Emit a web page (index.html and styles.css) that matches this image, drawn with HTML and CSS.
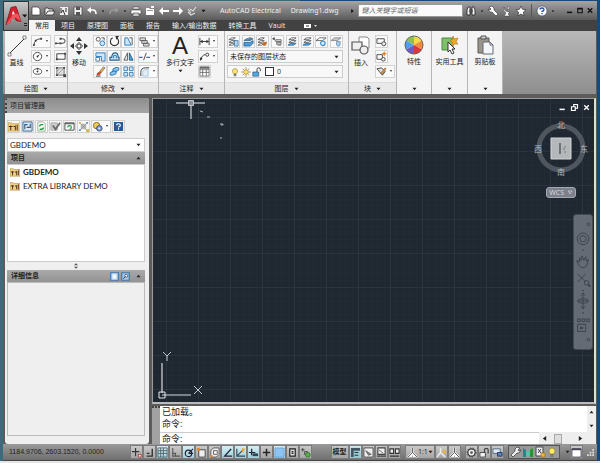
FILE: index.html
```html
<!DOCTYPE html>
<html lang="zh-CN">
<head>
  <meta charset="UTF-8" />
  <title>AutoCAD Electrical - Drawing1.dwg</title>
  <link rel="stylesheet" href="styles.css">
</head>
<body>
  <!-- icon sprite -->
  <svg class="sprite" aria-hidden="true">
    <symbol id="new" viewBox="0 0 12 12"><path d="M2 2h6l2 2v6H2z" fill="#fff" stroke="#333" stroke-width=".7"/></symbol>
    <symbol id="open" viewBox="0 0 12 12"><path d="M1 10V3h3l1 1h4v2h2l-2 4z" fill="#eee" stroke="#333" stroke-width=".8"/><path d="M2 9l2-3h6" stroke="#444" fill="none"/></symbol>
    <symbol id="saveas" viewBox="0 0 12 12"><path d="M2 2h8v8H2z" fill="#eee"/><path d="M3 3v5l2-3 2 5M8 3v4" stroke="#333" fill="none"/></symbol>
    <symbol id="save" viewBox="0 0 12 12"><path d="M2 2h8v8H2z" fill="#eee" stroke="#333" stroke-width=".6"/><path d="M4 2h4v3H4zM4 7h4v3H4z" fill="#555"/></symbol>
    <symbol id="undo" viewBox="0 0 12 12"><path d="M2 5h5q3 0 3 4" fill="none" stroke="#fff" stroke-width="1.6"/><path d="M1 5l4-3v6z" fill="#fff"/></symbol>
    <symbol id="redo" viewBox="0 0 12 12"><path d="M10 5H5Q2 5 2 9" fill="none" stroke="#999" stroke-width="1.6"/><path d="M11 5L7 2v6z" fill="#999"/></symbol>
    <symbol id="print" viewBox="0 0 12 12"><path d="M1 5h10v4H1zM3 2h6v2H3zM3 8h6v3H3z" fill="#fff" stroke="#444" stroke-width=".6"/></symbol>
    <symbol id="folder" viewBox="0 0 12 12"><path d="M2 3h3l1 1h4v6H2zM7 1h3v2H7z" fill="#fff"/><path d="M3 5.500h6" stroke="#999"/></symbol>
    <symbol id="left" viewBox="0 0 12 12"><path d="M1 6l4-4v3h6v2H5v3z" fill="#fff"/></symbol>
    <symbol id="right" viewBox="0 0 12 12"><path d="M11 6L7 2v3H1v2h6v3z" fill="#fff"/></symbol>
    <symbol id="globe" viewBox="0 0 12 12"><path d="M2 7l3 3 4-2M4 4l3 2 3-4M2 4l3 4" fill="none" stroke="#ddd" stroke-width="1.200"/></symbol>
    <symbol id="binoc" viewBox="0 0 12 12"><path d="M2 10V5l1-3h2v8zM7 10V2h2l1 3v5zM5 5h2v2H5z" fill="#eee" stroke="#222" stroke-width=".8"/></symbol>
    <symbol id="wrench" viewBox="0 0 12 12"><path d="M2 2l3-1 2 2v2l4 4-2 2-4-4H3L1 4l2 1 1-1z" fill="#fff" stroke="#333" stroke-width=".6"/></symbol>
    <symbol id="tool" viewBox="0 0 12 12"><path d="M10 2L7 1 5 3v2L1 9l2 2 4-4h2l2-3-2 1-1-1z" fill="#eee" stroke="#333" stroke-width=".7"/></symbol>
    <symbol id="dish" viewBox="0 0 12 12"><path d="M3 2q0 5 6 5L7 9l2 2H3l2-3Q1 5 3 2zM8 1l1 1-2 3-1-1z" fill="#fff" stroke="#333" stroke-width=".5"/></symbol>
    <symbol id="star" viewBox="0 0 12 12"><path d="M6 1l1.500 3.300 3.500.4-2.600 2.400.7 3.700L6 9l-3.100 1.800.7-3.700L1 4.700l3.500-.4z" fill="#fff" stroke="#333" stroke-width=".7"/></symbol>
    <symbol id="help" viewBox="0 0 12 12"><circle cx="6" cy="6" r="5" fill="#fff" stroke="#456" stroke-width=".7"/><path d="M4 4.500Q4 3 6 3t2 1.500Q8 6 6 6.500V7M6 8v1.300" fill="none" stroke="#1d4fae" stroke-width="1.300"/></symbol>
    <symbol id="min" viewBox="0 0 12 12"><path d="M2 8.500h7" stroke="currentColor" stroke-width="2"/></symbol>
    <symbol id="max" viewBox="0 0 12 12"><path d="M3 3h6v6H3zM3 4h6" fill="none" stroke="currentColor" stroke-width="1.500"/></symbol>
    <symbol id="restore" viewBox="0 0 12 12"><path d="M2 5h5v5H2zM5 5V2h5v5H7" fill="none" stroke="currentColor" stroke-width="1.600"/></symbol>
    <symbol id="close" viewBox="0 0 12 12"><path d="M3 3l6 6M9 3l-6 6" stroke="currentColor" stroke-width="1.800"/></symbol>
    <symbol id="line" viewBox="0 0 20 20"><path d="M2 18L18 2" stroke="#333"/><path d="M1 17h3v3H1zM16 0h3v3h-3z" fill="#fff" stroke="#555" stroke-width=".7"/></symbol>
    <symbol id="arc" viewBox="0 0 12 12"><path d="M2 10Q3 3 10 3" fill="none" stroke="#333"/><path d="M1 9h2v2H1zM3 4h2v2H3zM9 2h2v2H9z" fill="#444"/></symbol>
    <symbol id="circle" viewBox="0 0 12 12"><circle cx="6" cy="6" r="4.500" fill="#fff" stroke="#333" stroke-width=".9"/><path d="M6 6l2-2" stroke="#333"/><circle cx="6" cy="6" r="1" fill="#333"/></symbol>
    <symbol id="ellipse" viewBox="0 0 12 12"><ellipse cx="6" cy="6" rx="4.500" ry="3" fill="#fff" stroke="#333" stroke-width=".9"/><circle cx="6" cy="6" r="1" fill="#333"/><path d="M6 2v2" stroke="#333"/></symbol>
    <symbol id="pline" viewBox="0 0 12 12"><path d="M1 8h4M6 3h2q3 0 3 2.500T8 8H5" fill="none" stroke="#333"/><path d="M0 7h2v2H0zM5 2h2v2H5zM5 7h2v2H5z" fill="#444"/></symbol>
    <symbol id="rect" viewBox="0 0 12 12"><path d="M2 3h9v6H2z" fill="none" stroke="#333"/><path d="M1 8h2v2H1zM10 2h2v2h-2z" fill="#444"/></symbol>
    <symbol id="hatch" viewBox="0 0 12 12"><path d="M2 2h8v8H2z" fill="#ddd" stroke="#555" stroke-width=".8"/><path d="M2 6l4-4M2 10l8-8" fill="none" stroke="#888" stroke-width=".7"/><path d="M1 1h2v2H1zM9 1h2v2H9zM1 9h2v2H1zM9 9h3v3H9z" fill="#444"/></symbol>
    <symbol id="move" viewBox="0 0 20 20"><path d="M8 8h4v4H8z" fill="#fff" stroke="#222"/><path d="M10 1l3 4H7zM10 19l3-4H7zM1 10l4-3v6zM19 10l-4-3v6z" fill="#333"/><path d="M10 4v3M10 13v3M4 10h3M13 10h3" stroke="#333" stroke-dasharray="1"/></symbol>
    <symbol id="copy" viewBox="0 0 12 12"><circle cx="3.500" cy="3.500" r="2.200" fill="#fff" stroke="#555"/><circle cx="8" cy="8" r="2.600" fill="#cfe5f8" stroke="#2a7ab8"/><path d="M7 2h3v3" fill="none" stroke="#555"/></symbol>
    <symbol id="rotate" viewBox="0 0 12 12"><path d="M4 2a4.500 4.500 0 1 0 4 0" fill="none" stroke="#333" stroke-width="1.200"/><path d="M7 0h4L8 4z" fill="#333"/></symbol>
    <symbol id="trim" viewBox="0 0 12 12"><path d="M2 10V2h3l4 8z" fill="#cfe5f8" stroke="#2a7ab8"/><path d="M7 2h3v8" fill="none" stroke="#555"/></symbol>
    <symbol id="scale" viewBox="0 0 12 12"><path d="M1 2h10v9H7V6H1z" fill="#cfe5f8" stroke="#2a7ab8"/><path d="M1 7h4v4H1z" fill="#fff" stroke="#2a7ab8"/></symbol>
    <symbol id="stretch" viewBox="0 0 12 12"><path d="M1 10V7h2q0-5 4-5 3 0 3 5h1v3z" fill="#cfe5f8" stroke="#2a5f88" stroke-width="1.200"/><path d="M5 8V5h3v3" fill="none" stroke="#2a7ab8"/></symbol>
    <symbol id="mirror" viewBox="0 0 12 12"><path d="M5 2v8H1z" fill="#eee" stroke="#555"/><path d="M7 2v8h4z" fill="#4ba0dd" stroke="#2a5f88"/></symbol>
    <symbol id="erase" viewBox="0 0 12 12"><path d="M5 6l4-5 2 1-4 5z" fill="#e9b14d" stroke="#553" stroke-width=".6"/><path d="M2 8l3-2 2 1-2 3H2z" fill="#c34b2d"/><path d="M1 11h5" stroke="#333"/></symbol>
    <symbol id="join" viewBox="0 0 12 12"><ellipse cx="7.500" cy="4" rx="3.500" ry="2" fill="#8cc4ee" stroke="#2a7ab8" transform="rotate(-20 7 4)"/><ellipse cx="4.500" cy="8" rx="3.500" ry="2" fill="#8cc4ee" stroke="#2a7ab8" transform="rotate(-20 4 8)"/></symbol>
    <symbol id="array" viewBox="0 0 12 12"><path d="M1 1h4v4H1zM7 1h4v4H7zM1 7h4v4H1zM7 7h4v4H7z" fill="#cfe5f8" stroke="#3a80b5"/></symbol>
    <symbol id="offset" viewBox="0 0 12 12"><path d="M1 2h6v3H1zM3 5h6v3H3zM5 8h6v3H5z" fill="#ddd" stroke="#555" stroke-width=".9"/></symbol>
    <symbol id="break" viewBox="0 0 12 12"><path d="M0 7h4M8 7h4" stroke="#2a7ab8" stroke-width="1.200"/><path d="M5 10l3-8" stroke="#444"/></symbol>
    <symbol id="fillet" viewBox="0 0 12 12"><path d="M2 11V7q0-5 5-5h4" fill="none" stroke="#333"/><path d="M4 11V7q0-3 3-3h3v7z" fill="#e1effa" stroke="#8bb5d5" stroke-width=".7"/></symbol>
    <symbol id="dim" viewBox="0 0 12 12"><path d="M1 2v8M11 2v8M2 6h8" stroke="#333"/><path d="M1 6l3-2v4zM11 6L8 4v4z" fill="#333"/></symbol>
    <symbol id="leader" viewBox="0 0 12 12"><path d="M2 10q1-6 5-6" fill="none" stroke="#333"/><circle cx="9" cy="4" r="1.700" fill="#fff" stroke="#333"/><path d="M1 11V7l3 1z" fill="#333"/></symbol>
    <symbol id="table" viewBox="0 0 12 12"><path d="M1 1h10v10H1zM1 4h10M1 7h10M4 4v7M8 4v7" fill="#fff" stroke="#555" stroke-width=".8"/><path d="M1 1h10v2H1z" fill="#666"/></symbol>
    <symbol id="layers" viewBox="0 0 12 12"><path d="M1 4l3-2h4L5 4zM1 7l3-2h4L5 7zM1 10l3-2h4l-3 2z" fill="#fff" stroke="#444" stroke-width=".8"/><path d="M7 5h4v6H7z" fill="#b8d6ef" stroke="#2a6fa5" stroke-width=".8"/></symbol>
    <symbol id="layerset" viewBox="0 0 12 12"><path d="M1 5l3-2h7L8 5zM1 7l7 0 3-2v3l-3 3H1z" fill="#4a9cdc" stroke="#235b88" stroke-width=".8"/><path d="M6 1l4 1-2 2" fill="#777"/></symbol>
    <symbol id="layerfix" viewBox="0 0 12 12"><path d="M1 4l3-2h4L5 4zM1 7l3-2h4L5 7zM1 10l3-2h4l-3 2z" fill="#fff" stroke="#444" stroke-width=".8"/><path d="M6 7l5-1-1 4-3 1z" fill="#c56a2c"/></symbol>
    <symbol id="layerprev" viewBox="0 0 12 12"><path d="M4 4h6v2H4zM5 7h5v2H5zM6 10h4" fill="#ddd" stroke="#555" stroke-width=".8"/><path d="M0 3l3-2v4z" fill="#444"/></symbol>
    <symbol id="layeriso" viewBox="0 0 12 12"><path d="M2 4l3-2h5L7 4zM2 7l3-2h5L7 7z" fill="#fff" stroke="#444" stroke-width=".8"/><path d="M1 10l3-2h6l-3 2z" fill="#5aa8e2" stroke="#235b88" stroke-width=".8"/></symbol>
    <symbol id="layerfrz" viewBox="0 0 12 12"><path d="M0 5l4-3h7L7 5z" fill="#fff" stroke="#444" stroke-width=".8"/><circle cx="7.500" cy="8" r="2.500" fill="#cfe9fb" stroke="#3b8cc6" stroke-width="1.200"/></symbol>
    <symbol id="layeroff" viewBox="0 0 12 12"><path d="M0 5l4-3h7L7 5z" fill="#ccc" stroke="#777" stroke-width=".8"/><path d="M6 6h4v3l-1 2H7L6 9z" fill="#a9cdea" stroke="#4a7ba0" stroke-width=".7"/></symbol>
    <symbol id="bulb" viewBox="0 0 12 12"><path d="M3 5a3 3 0 1 1 6 0q0 2-1.500 3h-3Q3 7 3 5z" fill="#ffe96b" stroke="#97803a" stroke-width=".8"/><path d="M4.500 8h3v3h-3z" fill="#777"/></symbol>
    <symbol id="sun" viewBox="0 0 12 12"><path d="M6 0v12M0 6h12M2 2l8 8M10 2l-8 8" stroke="#9b7a30" stroke-width=".8"/><circle cx="6" cy="6" r="2.800" fill="#ffe36a" stroke="#9b7a30" stroke-width=".7"/></symbol>
    <symbol id="unlock" viewBox="0 0 12 12"><path d="M1 6h7v5H1z" fill="#5ba6dd" stroke="#235b88" stroke-width=".8"/><path d="M6 6V3q0-2 2-2t2 2v2" fill="none" stroke="#444" stroke-width="1.200"/></symbol>
    <symbol id="insert" viewBox="0 0 20 20"><path d="M8 1h8l2 2v9H8z" fill="#fff" stroke="#888"/><path d="M1 6h10v8H1z" fill="#eee" stroke="#555" stroke-width="1.200"/><circle cx="13" cy="14" r="4" fill="#eee" stroke="#555" stroke-width="1.200"/></symbol>
    <symbol id="block" viewBox="0 0 12 12"><path d="M1 3h8v5H1z" fill="#fff" stroke="#444"/><circle cx="8.500" cy="8.500" r="2.200" fill="#eee" stroke="#444"/></symbol>
    <symbol id="blocknew" viewBox="0 0 12 12"><path d="M1 4h6v5H1z" fill="#fff" stroke="#444"/><circle cx="8" cy="9" r="2" fill="#eee" stroke="#444"/><path d="M9 0l1 2 2 1-2 1-1 2-1-2-2-1 2-1z" fill="#e58a2c"/></symbol>
    <symbol id="attr" viewBox="0 0 12 12"><path d="M1 3l5-1 4 4-3 4z" fill="#ddd" stroke="#444"/><path d="M5 8l5-6 1 1-4 6z" fill="#d79a3c" stroke="#643" stroke-width=".5"/></symbol>
    <symbol id="wheel" viewBox="0 0 20 20"><path d="M10 10V1a9 9 0 0 1 7.800 4.500z" fill="#f2d84b"/><path d="M10 10l7.800-4.500a9 9 0 0 1 0 9z" fill="#f08a3c"/><path d="M10 10l7.800 4.500A9 9 0 0 1 10 19z" fill="#d9363e"/><path d="M10 10v9a9 9 0 0 1-7.800-4.500z" fill="#6b5bc4"/><path d="M10 10l-7.800 4.500a9 9 0 0 1 0-9z" fill="#4aa3e0"/><path d="M10 10L2.200 5.500A9 9 0 0 1 10 1z" fill="#8cc152"/><circle cx="10" cy="10" r="9" fill="none" stroke="#666"/></symbol>
    <symbol id="util" viewBox="0 0 20 20"><path d="M2 3h11v12H2z" fill="#7fc06b" stroke="#4c8a3c"/><path d="M13 1l1 3 4-1-2 4 2 2-4 0-2 2V7l-2-2 3-1z" fill="#f5a623" stroke="#b86f10" stroke-width=".6"/><path d="M8 7l7 7h-3l2 4-2 1-2-4-2 2z" fill="#fff" stroke="#222" stroke-width=".9"/></symbol>
    <symbol id="clip" viewBox="0 0 20 20"><path d="M3 3h11v15H3z" fill="#9a958c" stroke="#5d5850"/><path d="M6 1h5v3H6z" fill="#ccc" stroke="#555"/><path d="M8 7h7l3 3v9H8z" fill="#f3f7fc" stroke="#667"/><path d="M15 7v3h3" fill="none" stroke="#667"/></symbol>
    <symbol id="prj" viewBox="0 0 12 12"><path d="M0 2h4l1 1h7v8H0z" fill="#efcf84" stroke="#b98d38" stroke-width=".7"/><path d="M3 5v5M1 6h4M8 5v5M6 6h2M10 4v6" stroke="#4c2f14" stroke-width="1.100"/></symbol>
    <symbol id="sheet" viewBox="0 0 12 12"><path d="M1 1h10v10H1z" fill="#dbe9f6" stroke="#2f5e8c"/><path d="M3 9V4h3M5 7h4V3" fill="none" stroke="#2f5e8c" stroke-width="1.200"/></symbol>
    <symbol id="refresh" viewBox="0 0 12 12"><path d="M2 1h6l2 2v8H2z" fill="#fff" stroke="#6b8a6b" stroke-width=".7"/><path d="M4 6q0-2 2-2h2M8 7q0 2-2 2H4" fill="none" stroke="#1f9a3a" stroke-width="1.500"/></symbol>
    <symbol id="check" viewBox="0 0 12 12"><path d="M1 2h7v8H1z" fill="#ccc" stroke="#aaa"/><path d="M3 5l3 4 5-7" fill="none" stroke="#666" stroke-width="1.800"/></symbol>
    <symbol id="pub" viewBox="0 0 12 12"><path d="M1 2h10v8H1z" fill="#fff" stroke="#444"/><path d="M1 3h10" stroke="#444"/><path d="M4 7a2 2 0 1 1 2 2" fill="none" stroke="#1f9a3a" stroke-width="1.300"/></symbol>
    <symbol id="nodes" viewBox="0 0 12 12"><path d="M3 3h6v6H3z" fill="#b5b5b5"/><path d="M1 1l10 10M11 1L1 11" stroke="#9a9a9a" stroke-width=".8"/><path d="M1 1h2v2H1zM9 9h3v3H9z" fill="#d3b13b"/><path d="M9 1h2v2H9zM1 9h2v2H1z" fill="#5b8bc0"/></symbol>
    <symbol id="gearset" viewBox="0 0 12 12"><circle cx="5" cy="5" r="3.500" fill="#f1cd4d" stroke="#8a6a1c"/><circle cx="8" cy="8" r="3" fill="#7f9cd0" stroke="#33508a"/><circle cx="8" cy="8" r="1" fill="#fff"/></symbol>
    <symbol id="helpbox" viewBox="0 0 12 12"><path d="M1 1h10v10H1z" fill="#245a9b"/><path d="M4 4.500Q4 3 6 3t2 1.500Q8 6 6 6.500V7M6 8v1.500" fill="none" stroke="#fff" stroke-width="1.300"/></symbol>
    <symbol id="details" viewBox="0 0 12 12"><path d="M1 1h10v10H1z" fill="#cfe2f5" stroke="#3d76ad" stroke-width="1.600"/><path d="M4 4h4M4 6h4M4 8h4" stroke="#fff" stroke-width="1.400"/></symbol>
    <symbol id="preview" viewBox="0 0 12 12"><path d="M1 1h10v10H1z" fill="#a9c9e6" stroke="#3d76ad" stroke-width="1.600"/><circle cx="7" cy="5" r="2" fill="#fff" stroke="#346"/><path d="M3 9l3-3" stroke="#346" stroke-width="1.300"/></symbol>
    <symbol id="infer" viewBox="0 0 12 12"><path d="M5 1v9M1 5h8" stroke="#333" stroke-width="1.200"/><path d="M8 8h3v3H8z" fill="#fff" stroke="#a33"/></symbol>
    <symbol id="snap" viewBox="0 0 12 12"><path d="M9 2v8H3M3 7h3" fill="none" stroke="#333" stroke-width="1.500"/></symbol>
    <symbol id="grid" viewBox="0 0 12 12"><path d="M1 1h10v10H1zM1 4h10M1 7h10M4 1v10M7 1v10" fill="none" stroke="#4c5a62" stroke-width=".9"/></symbol>
    <symbol id="ortho" viewBox="0 0 12 12"><path d="M3 1v9h8M3 7h3v3" fill="none" stroke="#555" stroke-width="1.200"/></symbol>
    <symbol id="polar" viewBox="0 0 12 12"><circle cx="6" cy="7" r="3.500" fill="none" stroke="#223" stroke-width="1.300"/><path d="M6 7l5-5M6 7h5" stroke="#223" stroke-width="1.200"/></symbol>
    <symbol id="osnap" viewBox="0 0 12 12"><path d="M3 3h7v8H3z" fill="#eee" stroke="#444"/><path d="M1 1h3v3H1z" fill="#e58a2c"/></symbol>
    <symbol id="osnap3d" viewBox="0 0 12 12"><path d="M2 4l3-3h6v7l-3 3H2z" fill="#eee" stroke="#555"/><path d="M5 4h4v4H5z" fill="#fff" stroke="#555"/><path d="M1 9h3v2H1z" fill="#e58a2c"/></symbol>
    <symbol id="angle" viewBox="0 0 12 12"><path d="M10 2L3 10h8" fill="none" stroke="#223" stroke-width="1.500"/></symbol>
    <symbol id="ducs" viewBox="0 0 12 12"><path d="M2 2v8h9M2 10l6-6" fill="none" stroke="#345" stroke-width="1.200"/><path d="M8 1l3 1-2 4-2-2z" fill="#f2a52f"/></symbol>
    <symbol id="dyn" viewBox="0 0 12 12"><path d="M4 2v7M1 6h7" stroke="#223" stroke-width="1.300"/><path d="M5 7h6v3H5z" fill="#345"/></symbol>
    <symbol id="plus" viewBox="0 0 12 12"><path d="M6 2v8M2 6h8" stroke="#222" stroke-width="1.600"/></symbol>
    <symbol id="tpy" viewBox="0 0 12 12"><path d="M1 1h10v10H1z" fill="#8ec3f2" stroke="#3b7ec0" stroke-dasharray="1"/></symbol>
    <symbol id="qp" viewBox="0 0 12 12"><path d="M3 2h6v8H3zM5 5h2M5 7h2" fill="#ddd" stroke="#222" stroke-width="1.300"/></symbol>
    <symbol id="sel" viewBox="0 0 12 12"><path d="M1 3h4M3 1v4M5 5h3v3H5z" fill="none" stroke="#444"/><circle cx="8.500" cy="8.500" r="2.500" fill="#5cb049" stroke="#2f7a22"/></symbol>
    <symbol id="model" viewBox="0 0 12 12"><path d="M1 1h10v10H1z" fill="#456"/><path d="M4 4h7v7H4z" fill="#9cc"/><path d="M5 6h4M5 9h4" stroke="#234" stroke-width="1.200"/></symbol>
    <symbol id="layout" viewBox="0 0 12 12"><path d="M1 1h10v10H1z" fill="#eee" stroke="#444"/><path d="M3 4l6 4-3 1z" fill="#8a8a8a" stroke="#444" stroke-width=".7"/></symbol>
    <symbol id="quick" viewBox="0 0 12 12"><path d="M2 1h8v7H2zM1 10h10" fill="#eee" stroke="#444" stroke-width="1.200"/><path d="M3 3l5 4" stroke="#666"/></symbol>
    <symbol id="views" viewBox="0 0 12 12"><path d="M1 2h4v5H1zM7 2h4v5H7zM1 10h10" fill="#eee" stroke="#333" stroke-width="1.200"/></symbol>
    <symbol id="anno" viewBox="0 0 12 12"><path d="M6 1v5L1 11M6 6l5 5M4 11l2-5 2 5" fill="none" stroke="#fff" stroke-width="1.900"/><path d="M6 1v5L1 11M6 6l5 5" fill="none" stroke="#444" stroke-width=".9"/></symbol>
    <symbol id="annoadd" viewBox="0 0 12 12"><path d="M5 1v5L1 11M5 6l5 5" fill="none" stroke="#eee" stroke-width="1.600"/><path d="M9 2l1 2 2 1-2 1-1 2-1-2-2-1 2-1z" fill="#f0b23a"/></symbol>
    <symbol id="gear" viewBox="0 0 12 12"><circle cx="6" cy="6" r="4" fill="#eee" stroke="#333" stroke-width="1.300"/><circle cx="6" cy="6" r="5" fill="none" stroke="#444" stroke-dasharray="1.500"/><circle cx="6" cy="6" r="1.500" fill="#555"/></symbol>
    <symbol id="lock" viewBox="0 0 12 12"><path d="M1 6h6v5H1z" fill="#eee" stroke="#444"/><path d="M6 6V3q0-1.500 2-1.500T10 3v4" fill="none" stroke="#444" stroke-width="1.300"/></symbol>
    <symbol id="hw" viewBox="0 0 12 12"><path d="M1 2h8v5H1z" fill="#dbe9f7" stroke="#567"/><path d="M6 6h5v4H6z" fill="#4d87c4" stroke="#335"/></symbol>
    <symbol id="vault" viewBox="0 0 12 12"><path d="M1 2l3 2v7H1z" fill="#1f8a86"/><path d="M11 2L8 4v7h3z" fill="#2e8f3c"/><path d="M4 4l2 3 2-3v4L6 11 4 8z" fill="#4cc9ae"/></symbol>
    <symbol id="trust" viewBox="0 0 12 12"><path d="M2 1h7v9H2zM4 3l3 4M7 3L4 7" fill="#eee" stroke="#445"/><path d="M7 7h4v4H7z" fill="#f0b23a" stroke="#96691a" stroke-width=".6"/></symbol>
    <symbol id="clean" viewBox="0 0 12 12"><path d="M1 2h10v9H1z" fill="#fff" stroke="#445"/><path d="M1 2.500h10" stroke="#445" stroke-width="2"/></symbol>
    <symbol id="down" viewBox="0 0 6 6"><path d="M0 1h6L3 5z" fill="currentColor"/></symbol>
    <symbol id="up" viewBox="0 0 6 6"><path d="M0 5h6L3 1z" fill="currentColor"/></symbol>
    <symbol id="play" viewBox="0 0 6 6"><path d="M1 0v6l4-3z" fill="currentColor"/></symbol>
    <symbol id="back" viewBox="0 0 6 6"><path d="M5 0v6L1 3z" fill="currentColor"/></symbol>
  </svg>

  <div class="window">
    <header class="header">
      <button class="app-btn" aria-label="应用程序菜单">
        <svg viewBox="0 0 24 26"><path d="M2 21L7 4l5-1 5 15-5-1-1-3-4 1-1 4z" fill="#d61f2c" stroke="#8d0e17" stroke-width=".8"/><path d="M8 11l1-4 2 4z" fill="#fff"/><path d="M2 21l4-1 1-4 5-2 5 4-3-8-5 1z" fill="#f0565f"/><path d="M18 11h5l-2 3z" fill="#111"/><path d="M20 20h3M20 22h3" stroke="#222"/></svg>
      </button>

      <div class="titlebar">
        <div class="qat">
          <button class="qbtn" aria-label="新建"><svg><use href="#new"/></svg></button>
          <button class="qbtn" aria-label="打开"><svg><use href="#open"/></svg></button>
          <button class="qbtn" aria-label="另存为"><svg><use href="#saveas"/></svg></button>
          <button class="qbtn" aria-label="保存"><svg><use href="#save"/></svg></button>
          <button class="qbtn" aria-label="放弃"><svg><use href="#undo"/></svg></button>
          <i class="dot"></i>
          <button class="qbtn" aria-label="重做"><svg><use href="#redo"/></svg></button>
          <i class="dot"></i>
          <button class="qbtn" aria-label="打印"><svg><use href="#print"/></svg></button>
          <button class="qbtn" aria-label="项目"><svg><use href="#folder"/></svg></button>
          <button class="qbtn" aria-label="上一个"><svg><use href="#left"/></svg></button>
          <button class="qbtn" aria-label="下一个"><svg><use href="#right"/></svg></button>
          <button class="qbtn" aria-label="浏览"><svg><use href="#globe"/></svg></button>
          <button class="qmore" aria-label="自定义"><svg class="tri"><use href="#down"/></svg></button>
        </div>
        <div class="title"><span>AutoCAD Electrical</span><span>Drawing1.dwg</span></div>
        <svg class="tri dark"><use href="#play"/></svg>
        <input class="search" type="text" placeholder="键入关键字或短语" aria-label="搜索">
        <div class="info">
          <button class="qbtn" aria-label="查找"><svg><use href="#binoc"/></svg></button>
          <i class="dot"></i>
          <button class="qbtn" aria-label="速博应用"><svg><use href="#wrench"/></svg></button>
          <button class="qbtn" aria-label="通讯中心"><svg><use href="#dish"/></svg></button>
          <button class="qbtn" aria-label="收藏夹"><svg><use href="#star"/></svg></button>
          <i class="sep"></i>
          <button class="qbtn" aria-label="帮助"><svg><use href="#help"/></svg></button>
          <i class="dot"></i>
        </div>
        <div class="win-ctrl">
          <button aria-label="最小化"><svg><use href="#min"/></svg></button>
          <button aria-label="最大化"><svg><use href="#max"/></svg></button>
          <button aria-label="关闭"><svg><use href="#close"/></svg></button>
        </div>
      </div>

      <nav class="tabs">
        <a href="#" class="tab active">常用</a>
        <a href="#" class="tab">项目</a>
        <a href="#" class="tab">原理图</a>
        <a href="#" class="tab">面板</a>
        <a href="#" class="tab">报告</a>
        <a href="#" class="tab">输入/输出数据</a>
        <a href="#" class="tab">转换工具</a>
        <a href="#" class="tab">Vault</a>
        <button class="tab-toggle" aria-label="最小化功能区"><svg viewBox="0 0 14 6"><path d="M1 1h7v4H1z" fill="#fff"/><path d="M3 3h3" stroke="#333"/><path d="M11 2h3l-1.500 2z" fill="#ddd"/></svg></button>
      </nav>
    </header>

    <section class="ribbon">
      <div class="panel">
        <div class="tools">
          <button class="big"><svg><use href="#line"/></svg>直线</button>
          <div class="col">
            <button class="tool drop" aria-label="圆弧"><svg><use href="#arc"/></svg></button>
            <button class="tool drop" aria-label="圆"><svg><use href="#circle"/></svg></button>
            <button class="tool drop" aria-label="椭圆"><svg><use href="#ellipse"/></svg></button>
          </div>
          <div class="col">
            <button class="tool" aria-label="多段线"><svg><use href="#pline"/></svg></button>
            <button class="tool" aria-label="矩形"><svg><use href="#rect"/></svg></button>
            <button class="tool" aria-label="图案填充"><svg><use href="#hatch"/></svg></button>
          </div>
        </div>
        <button class="caption">绘图 <svg class="tri"><use href="#down"/></svg></button>
      </div>

      <div class="panel">
        <div class="tools">
          <button class="big"><svg><use href="#move"/></svg>移动</button>
          <div class="trio">
            <button class="tool" aria-label="复制"><svg><use href="#copy"/></svg></button>
            <button class="tool" aria-label="旋转"><svg><use href="#rotate"/></svg></button>
            <button class="tool" aria-label="拉伸"><svg><use href="#trim"/></svg></button>
            <button class="tool" aria-label="缩放"><svg><use href="#scale"/></svg></button>
            <button class="tool" aria-label="偏移"><svg><use href="#stretch"/></svg></button>
            <button class="tool" aria-label="镜像"><svg><use href="#mirror"/></svg></button>
            <button class="tool" aria-label="删除"><svg><use href="#erase"/></svg></button>
            <button class="tool" aria-label="分解"><svg><use href="#join"/></svg></button>
            <button class="tool" aria-label="阵列"><svg><use href="#array"/></svg></button>
          </div>
          <div class="col">
            <button class="tool drop" aria-label="绘图次序"><svg><use href="#offset"/></svg></button>
            <button class="tool drop" aria-label="修剪"><svg><use href="#break"/></svg></button>
            <button class="tool drop" aria-label="圆角"><svg><use href="#fillet"/></svg></button>
          </div>
        </div>
        <button class="caption">修改 <svg class="tri"><use href="#down"/></svg></button>
      </div>

      <div class="panel">
        <div class="tools">
          <button class="big"><span class="letter">A</span>多行文字<svg class="tri"><use href="#down"/></svg></button>
          <div class="col">
            <button class="tool drop" aria-label="线性标注"><svg><use href="#dim"/></svg></button>
            <button class="tool drop" aria-label="引线"><svg><use href="#leader"/></svg></button>
            <button class="tool" aria-label="表格"><svg><use href="#table"/></svg></button>
          </div>
        </div>
        <button class="caption">注释 <svg class="tri"><use href="#down"/></svg></button>
      </div>

      <div class="panel">
        <div class="layer-tools">
          <div class="layer-row">
            <button class="tool" aria-label="图层特性"><svg><use href="#layers"/></svg></button>
            <button class="tool" aria-label="置为当前"><svg><use href="#layerset"/></svg></button>
            <button class="tool" aria-label="匹配"><svg><use href="#layerfix"/></svg></button>
            <button class="tool" aria-label="上一个图层"><svg><use href="#layerprev"/></svg></button>
            <button class="tool" aria-label="隔离"><svg><use href="#layeriso"/></svg></button>
            <button class="tool" aria-label="取消隔离"><svg><use href="#layeriso"/></svg></button>
            <button class="tool" aria-label="冻结"><svg><use href="#layerfrz"/></svg></button>
            <button class="tool" aria-label="关闭图层"><svg><use href="#layeroff"/></svg></button>
          </div>
          <div class="combo">
            <select aria-label="图层状态"><option>未保存的图层状态</option></select>
            <svg class="tri"><use href="#down"/></svg>
          </div>
          <div class="combo">
            <svg class="state"><use href="#bulb"/></svg>
            <svg class="state"><use href="#sun"/></svg>
            <svg class="state"><use href="#unlock"/></svg>
            <span class="swatch"></span>
            <select aria-label="图层"><option>0</option></select>
            <svg class="tri"><use href="#down"/></svg>
          </div>
        </div>
        <button class="caption">图层 <svg class="tri"><use href="#down"/></svg></button>
      </div>

      <div class="panel">
        <div class="tools">
          <button class="big"><svg><use href="#insert"/></svg>插入</button>
          <div class="col">
            <button class="tool" aria-label="创建块"><svg><use href="#block"/></svg></button>
            <button class="tool" aria-label="块编辑器"><svg><use href="#blocknew"/></svg></button>
            <button class="tool drop" aria-label="编辑属性"><svg><use href="#attr"/></svg></button>
          </div>
        </div>
        <button class="caption">块 <svg class="tri"><use href="#down"/></svg></button>
      </div>

      <button class="panel slim"><svg class="pic"><use href="#wheel"/></svg>特性<svg class="tri"><use href="#down"/></svg></button>
      <button class="panel slim"><svg class="pic"><use href="#util"/></svg>实用工具<svg class="tri"><use href="#down"/></svg></button>
      <button class="panel slim"><svg class="pic"><use href="#clip"/></svg>剪贴板<svg class="tri"><use href="#down"/></svg></button>
    </section>

    <main class="workspace">
      <aside class="palette">
        <h2 class="palette-title">项目管理器</h2>
        <div class="palette-body">
          <div class="palette-bar">
            <button class="tool" aria-label="打开项目"><svg><use href="#prj"/></svg></button>
            <button class="tool" aria-label="新建图形"><svg><use href="#sheet"/></svg></button>
            <button class="tool" aria-label="刷新"><svg><use href="#refresh"/></svg></button>
            <button class="tool" aria-label="任务列表"><svg><use href="#check"/></svg></button>
            <button class="tool" aria-label="更新"><svg><use href="#pub"/></svg></button>
            <button class="tool" aria-label="图形列表"><svg><use href="#nodes"/></svg></button>
            <button class="tool drop" aria-label="打印"><svg><use href="#gearset"/></svg></button>
            <button class="tool" aria-label="帮助"><svg><use href="#helpbox"/></svg></button>
          </div>
          <div class="combo project">
            <select aria-label="当前项目"><option>GBDEMO</option></select>
            <svg class="tri"><use href="#down"/></svg>
          </div>
          <h3 class="section-head">项目 <svg class="tri"><use href="#up"/></svg></h3>
          <ul class="projects">
            <li class="current"><svg><use href="#prj"/></svg>GBDEMO</li>
            <li><svg><use href="#prj"/></svg>EXTRA LIBRARY DEMO</li>
          </ul>
          <div class="splitter"><svg viewBox="0 0 6 8"><path d="M0 3h6L3 0zM0 5h6L3 8z" fill="#555"/></svg></div>
          <h3 class="section-head">
            <span>详细信息</span>
            <svg class="mini"><use href="#details"/></svg>
            <svg class="mini"><use href="#preview"/></svg>
            <svg class="tri"><use href="#up"/></svg>
          </h3>
          <div class="details"></div>
        </div>
      </aside>

      <div class="right">
        <div class="canvas">
          <svg class="crosshair" viewBox="0 0 50 46">
            <path d="M0 6h29M15 6v16" stroke="#a5aab0" stroke-width="1.600"/>
            <path d="M12.500 3.500h5v5h-5z" fill="#8b9096" stroke="#c5c8cb"/>
            <path d="M24 14l3 1M31 20h3M44 27h3v1h-2M44 41h2" stroke="#aeb3b8" fill="none"/>
          </svg>

          <div class="doc-ctrl">
            <button aria-label="最小化图形"><svg><use href="#min"/></svg></button>
            <button aria-label="还原图形"><svg><use href="#restore"/></svg></button>
            <button aria-label="关闭图形"><svg><use href="#close"/></svg></button>
          </div>

          <div class="viewcube">
            <svg viewBox="0 0 56 60">
              <circle cx="28" cy="29" r="22" fill="none" stroke="#50565e" stroke-width="5"/>
              <path d="M18 19h20v21H18z" fill="#b4b8bb" stroke="#d2d5d7"/>
              <path d="M27 24v11" stroke="#555" stroke-width="1.400"/>
              <path d="M32 27v2M32 32v2M30 30h2" stroke="#777" fill="none"/>
            </svg>
            <span class="n">北</span><span class="w">西</span><span class="e">东</span><span class="s">南</span>
          </div>
          <button class="wcs">WCS <svg viewBox="0 0 6 5"><path d="M1 1h4L3 4z" fill="none" stroke="#ddd" stroke-width=".6"/></svg></button>

          <div class="navbar">
            <svg viewBox="0 0 20 136">
              <g fill="none" stroke="#3a4149">
                <circle cx="16" cy="4" r="1.500"/>
                <circle cx="10" cy="20" r="6.500"/><circle cx="10" cy="20" r="3.500"/>
                <path d="M6 50q-3-4-3-6l3 2v-5l2 3 1-5 2 5 2-4 1 5 2-2-2 7-3 2H8z"/>
                <path d="M4 59l9 9M13 59l-9 9"/><circle cx="14" cy="69" r="2.500"/><path d="M16 71l2 2" stroke-width="2"/>
                <path d="M10 81v16M4 89h12M8 83l2-3 2 3M8 95l2 3 2-3"/><ellipse cx="10" cy="89" rx="6" ry="2.500"/>
                <path d="M4 109h3v3H4zM9 109h3v3H9zM14 109h3v3h-3zM4 115h9v8H4z"/>
                <circle cx="16" cy="132" r="1.500"/>
              </g>
              <path d="M7 117v4l4-2zM9 32h2v1H9zM9 77h2v1H9zM9 102h2v1H9z" fill="#3a4149"/>
            </svg>
          </div>

          <svg class="ucs" viewBox="0 0 46 50">
            <path d="M7 42V12M7 44h29" stroke="#d7dadd" stroke-width="1.200"/>
            <path d="M4 41h6v6H4z" fill="none" stroke="#e8eaec"/>
            <path d="M8 1l4 4 4-4M12 5v5M39 35l8 8M47 35l-8 8" stroke="#c5c9cd" fill="none"/>
          </svg>
        </div>

        <div class="command">
          <div class="grip"></div>
          <div class="cmd-main">
            <div class="history"><p>已加载。</p><p>命令:</p></div>
            <div class="vscroll"><svg class="tri"><use href="#up"/></svg><svg class="tri"><use href="#down"/></svg></div>
            <div class="prompt"><label for="cmd">命令:</label><input id="cmd" type="text"></div>
            <div class="hscroll"><svg class="tri"><use href="#back"/></svg><i class="thumb"></i><svg class="tri"><use href="#play"/></svg></div>
          </div>
        </div>
      </div>
    </main>

    <footer class="status">
      <output class="coords">1184.9706, 2603.1520, 0.0000</output>
      <div class="group">
        <button class="sbtn" aria-label="推断约束"><svg><use href="#infer"/></svg></button>
        <button class="sbtn" aria-label="捕捉"><svg><use href="#snap"/></svg></button>
        <button class="sbtn on" aria-label="栅格"><svg><use href="#grid"/></svg></button>
        <button class="sbtn" aria-label="正交"><svg><use href="#ortho"/></svg></button>
        <button class="sbtn on" aria-label="极轴"><svg><use href="#polar"/></svg></button>
        <button class="sbtn" aria-label="对象捕捉"><svg><use href="#osnap"/></svg></button>
        <button class="sbtn" aria-label="三维对象捕捉"><svg><use href="#osnap3d"/></svg></button>
        <button class="sbtn on" aria-label="对象追踪"><svg><use href="#angle"/></svg></button>
        <button class="sbtn on" aria-label="动态UCS"><svg><use href="#ducs"/></svg></button>
        <button class="sbtn on" aria-label="动态输入"><svg><use href="#dyn"/></svg></button>
        <button class="sbtn" aria-label="线宽"><svg><use href="#plus"/></svg></button>
        <button class="sbtn on" aria-label="透明度"><svg><use href="#tpy"/></svg></button>
        <button class="sbtn" aria-label="快捷特性"><svg><use href="#qp"/></svg></button>
        <button class="sbtn" aria-label="选择循环"><svg><use href="#sel"/></svg></button>
      </div>
      <div class="group spaces">
        <button class="sbtn text">模型</button>
        <button class="sbtn on" aria-label="模型空间"><svg><use href="#model"/></svg></button>
        <button class="sbtn" aria-label="布局"><svg><use href="#layout"/></svg></button>
        <button class="sbtn" aria-label="快速查看布局"><svg><use href="#quick"/></svg></button>
        <button class="sbtn" aria-label="快速查看图形"><svg><use href="#views"/></svg></button>
      </div>
      <div class="group">
        <button class="sbtn text ratio"><svg><use href="#anno"/></svg>1:1<svg class="tri"><use href="#down"/></svg></button>
        <button class="sbtn" aria-label="注释可见性"><svg><use href="#annoadd"/></svg></button>
        <button class="sbtn" aria-label="自动缩放"><svg><use href="#anno"/></svg></button>
      </div>
      <div class="group">
        <button class="sbtn" aria-label="工作空间"><svg><use href="#gear"/></svg></button>
        <button class="sbtn" aria-label="锁定"><svg><use href="#lock"/></svg></button>
        <button class="sbtn" aria-label="硬件加速"><svg><use href="#hw"/></svg></button>
      </div>
      <div class="group tray">
        <svg><use href="#tool"/></svg>
        <svg><use href="#vault"/></svg>
        <svg><use href="#trust"/></svg>
        <svg><use href="#bulb"/></svg>
      </div>
      <div class="group">
        <svg class="tri"><use href="#down"/></svg>
        <button class="sbtn" aria-label="全屏显示"><svg><use href="#clean"/></svg></button>
      </div>
      <svg class="resize" viewBox="0 0 8 8"><path d="M6 0h2v2H6zM3 3h2v2H3zM6 3h2v2H6zM0 6h2v2H0zM3 6h2v2H3zM6 6h2v2H6z" fill="#ddd"/></svg>
    </footer>
  </div>
</body>
</html>
```
FILE: styles.css
```css
* {
  box-sizing: border-box;
}

body {
  margin: 0;
  height: 100vh;
  padding: 1px 3px 0;
  border-bottom: 2px solid #e4e6e8;
  background: linear-gradient(to right, #3c6b7c 50%, #174a7c 50%);
  font-family: "Open Sans", "Noto Sans CJK SC", sans-serif;
  font-size: 7px;
  line-height: 10px;
  color: #222;
  overflow: hidden;
}

button, input, select {
  font: inherit;
  color: inherit;
  margin: 0;
  padding: 0;
  border: 0;
  background: none;
}

h2, h3, p, ul {
  margin: 0;
  padding: 0;
  font-size: inherit;
}

svg {
  display: block;
  width: 12px;
  height: 12px;
  flex: none;
}

svg.tri {
  width: 5px;
  height: 4px;
}

.sprite {
  position: absolute;
  width: 0;
  height: 0;
}

.window {
  height: 100%;
  display: flex;
  flex-direction: column;
  background: #5c5c5c;
}

/* title bar and tabs */
.header {
  display: grid;
  grid-template-columns: 26px 1fr;
  background: #424242;
}

.app-btn {
  grid-row: span 2;
  border: 1px solid #333;
  background: linear-gradient(#c8c8c8, #777);
}

.app-btn svg {
  width: 24px;
  height: 27px;
}

.titlebar {
  display: flex;
  align-items: center;
  height: 19px;
  background: linear-gradient(#a5a5a5, #5b5b5b);
}

.qat, .info, .win-ctrl {
  display: flex;
  align-items: center;
}

.qbtn {
  width: 14px;
  display: grid;
  place-items: center;
}

.dot {
  width: 2px;
  height: 2px;
  margin: 0 3px;
  background: #444;
}

.sep {
  width: 1px;
  height: 14px;
  margin: 0 3px;
  background: #555;
}

.qmore {
  padding: 0 2px;
  color: #111;
}

.title {
  display: flex;
  gap: 10px;
  padding: 0 12px;
  font-family: "Noto Sans", sans-serif;
  color: #f0f0f0;
}

.dark {
  color: #111;
}

.search {
  flex: 1;
  min-width: 0;
  height: 13px;
  margin: 0 1px 0 3px;
  padding: 0 2px;
  background: #fafafa;
  border: 1px solid #999;
}

.search::placeholder {
  color: #666;
  font-style: italic;
}

.win-ctrl {
  padding: 0 2px 0 8px;
  color: #111;
}

.win-ctrl svg {
  width: 10px;
  height: 9px;
}

.tabs {
  display: flex;
  height: 11px;
}

.tab {
  padding: 0 6px;
  line-height: 11px;
  color: #eee;
  text-decoration: none;
}

.tab.active {
  background: #f3f3f3;
  color: #222;
}

.tab-toggle {
  padding: 0 12px;
}

.tab-toggle svg {
  width: 14px;
  height: 6px;
}

/* ribbon */
.ribbon {
  display: grid;
  grid-template-columns: 63px 91px 66px 124px 48px 35px 36px 35px;
  height: 63px;
  padding-left: 2px;
  margin-right: 1px;
  background: linear-gradient(to bottom, #b8b8b8, #8e8e8e);
}

.panel {
  display: flex;
  flex-direction: column;
  border-right: 1px solid #b5b5b5;
  background: #f4f4f4;
}

.tools {
  flex: 1;
  display: flex;
  gap: 3px;
  justify-content: center;
  padding-top: 4px;
}

.caption {
  display: flex;
  align-items: center;
  justify-content: center;
  gap: 5px;
  height: 12px;
  border-top: 1px solid #ddd;
  background: #e9e9e9;
}

.big {
  display: flex;
  flex-direction: column;
  align-items: center;
  gap: 1px;
  padding: 0 1px;
}

.big svg:not(.tri) {
  width: 20px;
  height: 22px;
}

.letter {
  height: 22px;
  font-family: "Liberation Sans", sans-serif;
  font-size: 24px;
  line-height: 22px;
}

.col {
  display: flex;
  flex-direction: column;
  align-items: flex-start;
  gap: 2px;
}

.trio {
  display: grid;
  grid-template-columns: repeat(3, 14px);
  row-gap: 2px;
  align-content: start;
}

.tool {
  display: flex;
  align-items: center;
  justify-content: center;
  width: 13px;
  height: 13px;
  border: 1px solid #d2d2d2;
  background: #fafafa;
}

.trio .tool {
  width: 14px;
}

.tool svg {
  width: 11px;
  height: 11px;
}

.drop {
  width: 20px;
  justify-content: space-between;
  padding-right: 2px;
}

.drop::after {
  content: "";
  border: 1px solid transparent;
  border-top: 2px solid #333;
}

.layer-tools {
  flex: 1;
  display: flex;
  flex-direction: column;
  gap: 2px;
  padding: 4px 5px 0 2px;
}

.layer-row {
  display: flex;
  justify-content: space-between;
}

.combo {
  display: flex;
  align-items: center;
  gap: 1px;
  height: 13px;
  padding: 0 3px 0 2px;
  border: 1px solid #ccc;
  background: #f8f8f8;
}

.combo select {
  flex: 1;
  min-width: 0;
  appearance: none;
}

.state {
  width: 10px;
  height: 10px;
}

.swatch {
  width: 9px;
  height: 9px;
  margin: 0 2px;
  border: 1px solid #333;
  background: #fff;
}

.slim {
  align-items: center;
  gap: 2px;
  padding: 4px 0 3px;
}

.slim .pic {
  width: 20px;
  height: 20px;
}

.slim .tri {
  margin-top: auto;
}

/* workspace */
.workspace {
  flex: 1;
  min-height: 0;
  display: grid;
  grid-template-columns: 144px 1fr;
  gap: 3px;
  padding: 4px 1px 0 2px;
}

.palette {
  display: flex;
  flex-direction: column;
  border-radius: 3px;
  background: #efefef;
  overflow: hidden;
}

.palette-title {
  padding-left: 3px;
  line-height: 15px;
  font-weight: normal;
  background: linear-gradient(#8d8d8d, #a5a5a5);
  border-left: 2px dotted #444;
}

.palette-body {
  flex: 1;
  display: flex;
  flex-direction: column;
  padding: 7px 4px 8px 2px;
}

.palette-bar {
  display: flex;
  gap: 1px;
  margin-bottom: 5px;
}

.project {
  height: 14px;
  background: #fff;
}

.project, .projects {
  font-family: Lato, sans-serif;
  font-size: 8px;
}

.section-head {
  display: flex;
  align-items: center;
  gap: 2px;
  height: 12px;
  padding: 0 4px;
  background: linear-gradient(#a9a9a9, #939393);
}

.section-head .tri {
  margin-left: auto;
}

.section-head span {
  flex: 1;
}

.section-head .mini {
  width: 9px;
  height: 9px;
}

.section-head .mini + .tri {
  margin-left: 4px;
}

.projects {
  flex: 12;
  padding: 0 2px;
  list-style: none;
  border: 1px solid #ccc;
  background: #fff;
}

.projects li {
  display: flex;
  align-items: center;
  gap: 3px;
  height: 14px;
}

.projects svg {
  width: 10px;
  height: 10px;
}

.current {
  font-weight: bold;
}

.splitter {
  display: grid;
  place-items: center;
  height: 8px;
}

.splitter svg {
  width: 4px;
  height: 6px;
}

.details {
  flex: 19;
  border: 1px solid #bbb;
}

.right {
  display: grid;
  grid-template-rows: 1fr 38px;
  gap: 2px;
  min-width: 0;
}

.canvas {
  position: relative;
  border: solid #9a9a9a;
  border-width: 1px 2px 2px 1px;
  border-right-color: #ddd;
  border-bottom-color: #bbb;
  background-color: #1f2731;
  background-image:
    linear-gradient(to right, #2b343e 1px, transparent 1px),
    linear-gradient(to bottom, #2b343e 1px, transparent 1px),
    linear-gradient(to right, transparent 6px, #222b35 6px 7px, transparent 7px 13px, #222b35 13px 14px, transparent 14px 19px, #222b35 19px 20px, transparent 20px 26px, #222b35 26px 27px, transparent 27px),
    linear-gradient(to bottom, transparent 7px, #222b35 7px 8px, transparent 8px 14px, #222b35 14px 15px, transparent 15px 20px, #222b35 20px 21px, transparent 21px 27px, #222b35 27px 28px, transparent 28px);
  background-size: 32px 34px;
  background-position: 13px 18px;
}

.crosshair {
  position: absolute;
  left: 23px;
  top: -2px;
  width: 50px;
  height: 46px;
}

.doc-ctrl {
  position: absolute;
  top: 4px;
  right: 3px;
  display: flex;
  gap: 3px;
  color: #fff;
}

.doc-ctrl svg {
  width: 9px;
  height: 9px;
}

.viewcube {
  position: absolute;
  top: 20px;
  right: 5px;
  width: 56px;
  height: 60px;
  font-size: 8px;
  line-height: 8px;
  color: #b4b7ba;
}

.viewcube svg {
  width: 56px;
  height: 60px;
}

.viewcube span {
  position: absolute;
}

.n { left: 24px; top: 2px; }
.s { left: 24px; bottom: 3px; }
.w { left: 1px; top: 26px; }
.e { right: 1px; top: 26px; }

.wcs {
  position: absolute;
  top: 88px;
  right: 18px;
  display: flex;
  align-items: center;
  gap: 3px;
  height: 11px;
  padding: 0 2px;
  border: 1px solid #a5a9b2;
  border-radius: 3px;
  background: #7b808c;
  color: #ddd;
}

.wcs svg {
  width: 6px;
  height: 5px;
}

.navbar {
  position: absolute;
  top: 115px;
  right: 1px;
  border: 1px solid #444b53;
  border-radius: 3px;
  background: #656b74;
}

.navbar svg {
  width: 18px;
  height: 134px;
}

.ucs {
  position: absolute;
  left: 2px;
  bottom: 1px;
  width: 46px;
  height: 50px;
  overflow: visible;
}

/* command line */
.command {
  display: grid;
  grid-template-columns: 8px 1fr;
  background: #fff;
}

.grip {
  background: #a2a2a2;
  border-top: 2px dotted #444;
}

.cmd-main {
  display: grid;
  grid-template-columns: 1fr 48px 9px;
  grid-template-rows: 26px 1fr;
  font-size: 9px;
  line-height: 12px;
}

.history {
  grid-column: span 2;
  padding-left: 2px;
}

.prompt {
  display: flex;
  align-items: center;
  padding-left: 2px;
  border-top: 1px solid #ccc;
}

.prompt input {
  flex: 1;
  min-width: 0;
  height: 10px;
}

.vscroll, .hscroll {
  display: flex;
  align-items: center;
  justify-content: space-between;
  background: #eee;
}

.vscroll {
  flex-direction: column;
  padding: 4px 0;
}

.hscroll {
  grid-column: span 2;
  padding: 0 13px 0 3px;
}

.hscroll .tri {
  height: 5px;
}

.thumb {
  width: 8px;
  height: 10px;
  margin-right: 10px;
  border: 1px solid #aaa;
  background: #ddd;
}

/* status bar */
.status {
  display: flex;
  align-items: center;
  justify-content: space-between;
  height: 17px;
  padding: 0 3px 0 6px;
  border-bottom: 1px solid #444;
  background: linear-gradient(#9a9a9a, #6f6f6f);
}

.coords {
  width: 117px;
  font-family: "Liberation Sans", sans-serif;
}

.group {
  display: flex;
  align-items: center;
}

.sbtn {
  display: flex;
  align-items: center;
  justify-content: center;
  width: 13px;
  height: 14px;
  border: 1px solid #7c7c7c;
  background: linear-gradient(#c9c9c9, #a5a5a5);
}

.sbtn svg:not(.tri) {
  width: 11px;
  height: 11px;
}

.on {
  background: linear-gradient(#d3eef4, #9fd0da);
}

.text {
  width: auto;
  padding: 0 1px;
  font-weight: bold;
}

.ratio {
  font-weight: normal;
}

.spaces {
  margin-left: 14px;
}

.tray {
  height: 14px;
  padding: 0 1px;
  border: 1px solid #555;
  background: #999;
}

.resize {
  width: 7px;
  height: 7px;
}
```
